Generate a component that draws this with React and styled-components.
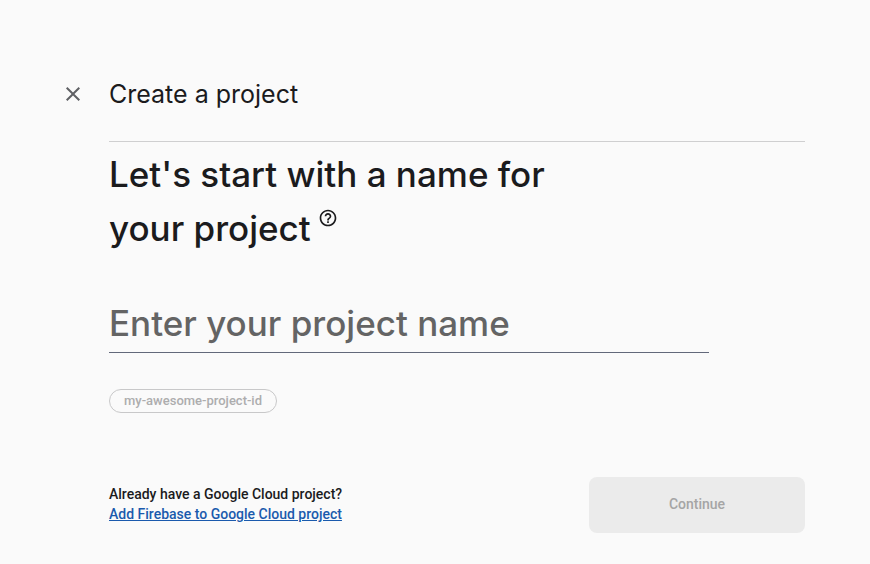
import React, { useState } from "react";
import styled, { createGlobalStyle } from "styled-components";

const GlobalStyle = createGlobalStyle`
    *, *::before, *::after {
        box-sizing: border-box;
    }

    body {
        margin: 0;
        background: #fafafa;
        color: #1b1b1d;
        font-family: Roboto, "Liberation Sans", sans-serif;
        font-size: 14px;
    }
`;

const Page = styled.main`
    padding: 76px 65px 31px 61px;
`;

const Header = styled.header`
    display: flex;
    align-items: center;
    gap: 24px;
    height: 36px;
`;

const CloseButton = styled.button`
    display: flex;
    padding: 0;
    border: 0;
    background: none;
    color: #5f6064;
    cursor: pointer;
`;

const Title = styled.h1`
    margin: 0;
    font-family: Inter, "Open Sans", sans-serif;
    font-size: 25px;
    font-weight: 400;
    line-height: 36px;
`;

const Content = styled.form`
    margin: 29px 0 0 48px;
    border-top: 1px solid #cfcfd0;
`;

const Question = styled.h2`
    max-width: 480px;
    margin: 5px 0 0;
    font-family: Inter, "Open Sans", sans-serif;
    font-size: 35px;
    font-weight: 500;
    line-height: 54px;
`;

const HelpButton = styled.button`
    padding: 0;
    margin-left: 7px;
    border: 0;
    background: none;
    color: inherit;
    line-height: 0;
    vertical-align: super;
    cursor: pointer;
`;

const NameInput = styled.input`
    display: block;
    width: 100%;
    max-width: 600px;
    height: 58px;
    margin-top: 40px;
    padding: 0 0 2px;
    border: 0;
    border-bottom: 1px solid #62687a;
    outline: 0;
    background: none;
    color: inherit;
    font-family: Inter, "Open Sans", sans-serif;
    font-size: 35px;
    font-weight: 500;

    &::placeholder {
        color: #646464;
        opacity: 1;
    }
`;

const ProjectId = styled.button`
    height: 24px;
    margin-top: 36px;
    padding: 0 14px 2px;
    border: 1px solid #c8c8c9;
    border-radius: 12px;
    background: none;
    color: #adadae;
    font-family: inherit;
    font-size: 13px;
    font-weight: 500;
`;

const Footer = styled.footer`
    display: flex;
    align-items: center;
    justify-content: space-between;
    margin-top: 64px;
`;

const Existing = styled.p`
    margin: 0;
    padding-bottom: 2px;
    font-weight: 500;
    line-height: 20px;
`;

const ExistingLink = styled.a`
    display: block;
    color: #1a5aad;
`;

const ContinueButton = styled.button`
    width: 216px;
    height: 56px;
    padding: 0 16px 2px;
    border: 0;
    border-radius: 8px;
    background: #ebebeb;
    color: #a5a5a5;
    font-family: inherit;
    font-size: 14px;
    font-weight: 500;
`;

const CloseIcon = () => (
    <svg width="24" height="24" viewBox="0 0 24 24" fill="currentColor" aria-hidden="true">
        <path d="M19 6.41 17.59 5 12 10.59 6.41 5 5 6.41 10.59 12 5 17.59 6.41 19 12 13.41 17.59 19 19 17.59 13.41 12z" />
    </svg>
);

const HelpIcon = () => (
    <svg width="20" height="20" viewBox="0 0 24 24" fill="currentColor" aria-hidden="true">
        <path d="M11 18h2v-2h-2v2zm1-16C6.48 2 2 6.48 2 12s4.48 10 10 10 10-4.48 10-10S17.52 2 12 2zm0 18c-4.41 0-8-3.59-8-8s3.59-8 8-8 8 3.59 8 8-3.59 8-8 8zm0-14c-2.21 0-4 1.79-4 4h2c0-1.1.9-2 2-2s2 .9 2 2c0 2-3 1.75-3 5h2c0-2.25 3-2.5 3-5 0-2.21-1.79-4-4-4z" />
    </svg>
);

const App = () => {

    const [name, setName] = useState("");

    return (
        <>
            <GlobalStyle />
            <Page>
                <Header>
                    <CloseButton type="button" aria-label="Close">
                        <CloseIcon />
                    </CloseButton>
                    <Title>Create a project</Title>
                </Header>
                <Content onSubmit={e => e.preventDefault()}>
                    <Question>
                        <label htmlFor="project-name">Let's start with a name for your project</label>
                        <HelpButton type="button" aria-label="Help">
                            <HelpIcon />
                        </HelpButton>
                    </Question>
                    <NameInput
                        id="project-name"
                        placeholder="Enter your project name"
                        autoComplete="off"
                        value={name}
                        onChange={e => setName(e.target.value)}
                    />
                    <ProjectId type="button" disabled>my-awesome-project-id</ProjectId>
                    <Footer>
                        <Existing>
                            Already have a Google Cloud project?
                            <ExistingLink href="#">Add Firebase to Google Cloud project</ExistingLink>
                        </Existing>
                        <ContinueButton type="submit" disabled={!name}>Continue</ContinueButton>
                    </Footer>
                </Content>
            </Page>
        </>
    );
}

export default App;
